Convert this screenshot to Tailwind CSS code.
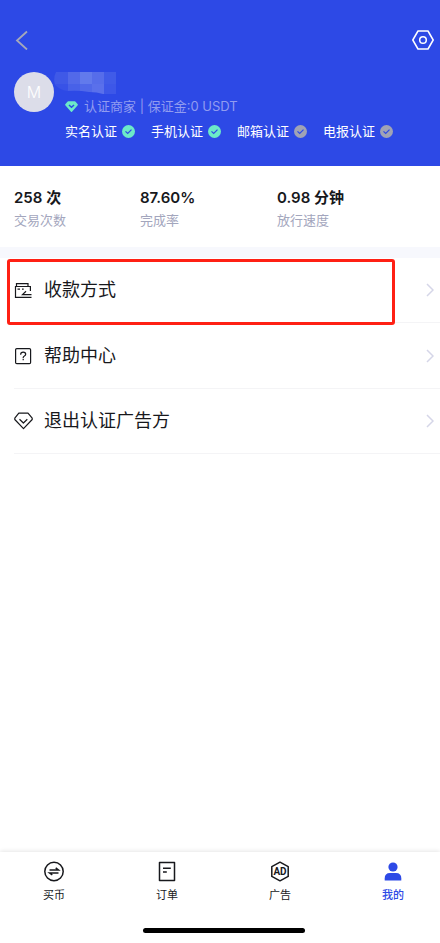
<!DOCTYPE html>
<html lang="zh-CN">
<head>
<meta charset="utf-8">
<meta name="viewport" content="width=device-width, initial-scale=1">
<title>我的</title>
<script src="https://cdn.jsdelivr.net/npm/@tailwindcss/browser@4"></script>
</head>
<body class="flex min-h-screen flex-col bg-white font-['Inter','Noto_Sans_CJK_SC',sans-serif] text-[#17181c]">
<svg class="hidden" aria-hidden="true">
  <symbol id="check" viewBox="0 0 13 13"><circle cx="6.5" cy="6.5" r="6.5" fill="currentColor"/><path d="M3.5 6.400 5.700 8.500 9.500 4.600" fill="none" stroke="#2d49e6" stroke-width="1.2"/></symbol>
  <symbol id="chevron" viewBox="0 0 8 14"><path d="M1 1 7 7 1 13" fill="none" stroke="currentColor" stroke-width="1.5"/></symbol>
</svg>

<header class="bg-[#2d49e6] pt-[30px] pb-6">
  <div class="flex h-5 items-center justify-between pr-[6px] pl-[15px]">
    <button type="button" aria-label="返回" class="text-[#a5a8ba]"><svg class="block h-5 w-[13px]" viewBox="0 0 13 20" fill="none" stroke="currentColor" stroke-width="1.8"><path d="M12 1.5 2 10.5 12 19.5"/></svg></button>
    <button type="button" aria-label="设置" class="text-white"><svg class="block h-5 w-[22px]" viewBox="0 0 22 20" fill="none" stroke="currentColor" stroke-width="1.5" stroke-linejoin="round"><path d="M6 1h10l5.2 9-5.2 9H6L.8 10z"/><circle cx="11" cy="10" r="3.3"/></svg></button>
  </div>
  <div class="mt-[22px] flex px-[14px]">
    <div class="flex size-10 shrink-0 items-center justify-center rounded-full bg-[#dcdde9] text-base font-light text-white">M</div>
    <div class="min-w-0">
      <svg class="block h-[23px] w-[62px]" viewBox="0 0 62 23" role="img" aria-label="昵称已隐藏">
        <clipPath id="smear"><path d="M2 0H62V22H49Q43 20 35 20Q24 18 13 19Q6 18 1 13Q-1 6 2 0Z"/></clipPath>
        <g clip-path="url(#smear)">
          <path fill="#3f59e7" d="M0 0h14v12H0z"/><path fill="#5269e9" d="M14 0h12v12H14z"/><path fill="#627aec" d="M26 0h12v12H26z"/><path fill="#566dea" d="M38 0h12v12H38z"/><path fill="#405be8" d="M50 0h12v12H50z"/>
          <path fill="#3852e7" d="M0 12h14v11H0z"/><path fill="#4861e8" d="M14 12h12v11H14z"/><path fill="#5068e9" d="M26 12h12v11H26z"/><path fill="#5a70eb" d="M38 12h12v11H38z"/><path fill="#3d57e8" d="M50 12h12v11H50z"/>
        </g>
      </svg>
      <div class="mt-[2px] ml-[11px] flex h-5 items-center gap-[6px] text-[13px] text-[#919cf0]">
        <svg class="h-3 w-[13px]" viewBox="0 0 13 12"><path d="M3.2 .3h6.6q.5 0 .8.4l2.1 2.600q.4.5 0 1L7 10.800q-.5.6-1 0L.3 4.300q-.4-.5 0-1L2.400.7q.3-.4.800-.4z" fill="#6ceac8"/><path d="M4 3.900 6.500 6.300 9 3.900" fill="none" stroke="#2d49e6" stroke-width="1.4"/></svg>
        <span class="whitespace-nowrap">认证商家 | 保证金:0 USDT</span>
      </div>
      <ul class="mt-[4px] ml-[11px] flex h-[21px] items-center gap-4 text-[13px] whitespace-nowrap text-white">
        <li class="flex items-center gap-[5px]">实名认证<svg class="size-[13px] text-[#6ceac8]"><use href="#check"/></svg></li>
        <li class="flex items-center gap-[5px]">手机认证<svg class="size-[13px] text-[#6ceac8]"><use href="#check"/></svg></li>
        <li class="flex items-center gap-[5px]">邮箱认证<svg class="size-[13px] text-[#a0a3b5]"><use href="#check"/></svg></li>
        <li class="flex items-center gap-[5px]">电报认证<svg class="size-[13px] text-[#a0a3b5]"><use href="#check"/></svg></li>
      </ul>
    </div>
  </div>
</header>

<main class="flex-1">
  <dl class="grid grid-cols-[126fr_137fr_163fr] pt-[21px] pb-4 pl-[14px]">
    <div class="flex flex-col-reverse"><dt class="text-[13px] leading-[22px] text-[#a3a6bd]">交易次数</dt><dd class="text-[15px] leading-[22px] font-semibold">258 次</dd></div>
    <div class="flex flex-col-reverse"><dt class="text-[13px] leading-[22px] text-[#a3a6bd]">完成率</dt><dd class="text-[15px] leading-[22px] font-semibold">87.60%</dd></div>
    <div class="flex flex-col-reverse"><dt class="text-[13px] leading-[22px] text-[#a3a6bd]">放行速度</dt><dd class="text-[15px] leading-[22px] font-semibold">0.98 分钟</dd></div>
  </dl>
  <div class="h-[11px] bg-[#f7f8fd]"></div>
  <ul class="pl-[14px] text-lg">
    <li class="relative border-b border-[#f4f4f6]">
      <a href="#" class="flex h-16 items-center pr-[6px]">
        <svg class="h-5 w-[19px]" viewBox="0 0 19 20" fill="none" stroke="currentColor" stroke-width="1.2"><path d="M17.500 17.300H1.500V6.500H16.400V11M2.500 6V3.600H14V6M3.500 9.200H6M8 9.200H9.700M17.500 14.600H8.500L12 11.200"/></svg>
        <span class="ml-[11px] flex-1">收款方式</span>
        <svg class="h-[14px] w-2 text-[#d5d6e8]"><use href="#chevron"/></svg>
      </a>
      <div class="pointer-events-none absolute top-[1px] right-[45px] -bottom-[3px] -left-[7px] rounded-[3px] border-3 border-[#ff2014]"></div>
    </li>
    <li class="border-b border-[#f4f4f6]">
      <a href="#" class="flex h-[65px] items-center pr-[6px]">
        <svg class="h-5 w-[19px]" viewBox="0 0 19 20" fill="none" stroke="currentColor" stroke-width="1.2"><rect x="1.600" y="2.600" width="15" height="15" rx="1.200"/><path d="M6.700 8.700V8.300Q6.700 6.200 9.200 6.200T11.700 8.300Q11.700 9.300 10.400 10Q9.200 10.600 9.200 11.600V12M9.200 12.800V14.200"/></svg>
        <span class="ml-[11px] flex-1">帮助中心</span>
        <svg class="h-[14px] w-2 text-[#d5d6e8]"><use href="#chevron"/></svg>
      </a>
    </li>
    <li class="border-b border-[#f4f4f6]">
      <a href="#" class="flex h-16 items-center pr-[6px]">
        <svg class="h-5 w-[19px]" viewBox="0 0 19 20" fill="none" stroke="currentColor" stroke-width="1.2" stroke-linejoin="round"><path d="M4.800 2.100H14L18.200 7.200V8.500L9.500 17.700 .8 8.500V7.200zM5.500 8.300 9.400 12 13.300 8.300"/></svg>
        <span class="ml-[11px] flex-1">退出认证广告方</span>
        <svg class="h-[14px] w-2 text-[#d5d6e8]"><use href="#chevron"/></svg>
      </a>
    </li>
  </ul>
</main>

<footer class="bg-white pt-[9px] pb-[10px] shadow-[0_-1px_4px_rgba(0,0,0,0.1)]">
  <nav class="flex justify-between pr-[36px] pl-[43px] text-[11px] leading-4">
    <a href="#" class="flex flex-col items-center gap-[5px]">
      <svg class="h-[21px] w-[22px]" viewBox="0 0 22 21" fill="none" stroke="currentColor" stroke-width="1.5"><circle cx="11" cy="10.5" r="9.2"/><path d="M6.500 9H15.500L12.700 6.900M15.500 11.900H6.500L9.300 14"/></svg>买币</a>
    <a href="#" class="flex flex-col items-center gap-[5px]">
      <svg class="h-[21px] w-[22px]" viewBox="0 0 22 21" fill="none" stroke="currentColor" stroke-width="1.5" stroke-linejoin="round"><path d="M3.500 1.500H18.500V19.500H3.500zM7 7.200H14.800M7 11H10.800"/></svg>订单</a>
    <a href="#" class="flex flex-col items-center gap-[5px]">
      <svg class="h-[21px] w-[22px]" viewBox="0 0 22 21" fill="none" stroke="currentColor" stroke-width="1.5" stroke-linejoin="round"><path d="M11 1.200 19.200 5.600V15.400L11 19.800 2.800 15.400V5.600z"/><text x="11" y="14" text-anchor="middle" font-family="Roboto" font-size="10" font-weight="700" fill="currentColor" stroke="none">AD</text></svg>广告</a>
    <a href="#" aria-current="page" class="flex flex-col items-center gap-[5px] font-medium text-[#2d49e6]">
      <svg class="h-[21px] w-[22px]" viewBox="0 0 22 21" fill="currentColor"><circle cx="11" cy="6" r="4.600"/><path d="M2.700 19.500V17.500Q2.700 12 8 12H14Q19.300 12 19.300 17.500V19.500z"/></svg>我的</a>
  </nav>
  <div class="mt-[25px] grid grid-cols-[143fr_162fr_135fr]"><div class="col-start-2 h-[5px] rounded-full bg-black"></div></div>
</footer>
</body>
</html>
